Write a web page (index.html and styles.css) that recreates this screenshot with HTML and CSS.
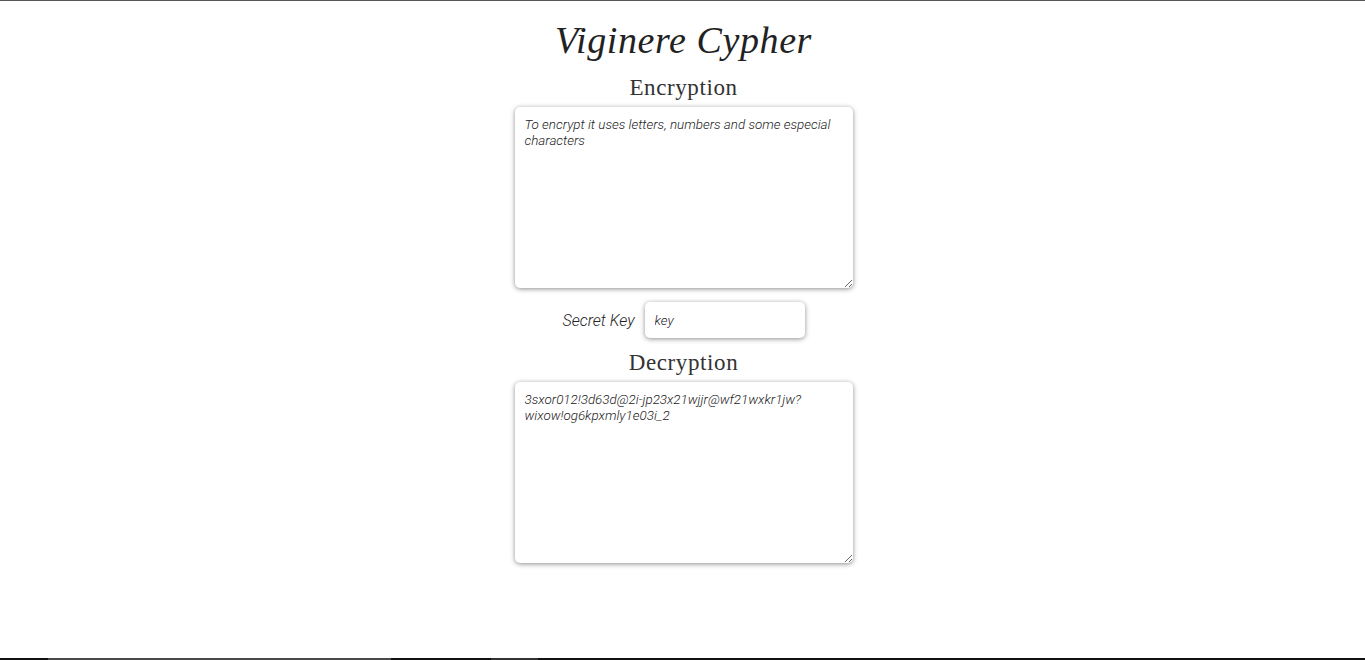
FILE: index.html
```html
<!DOCTYPE html>
<html>
<head>
<meta charset="utf-8">
<title>Viginere Cypher</title>
<link rel="stylesheet" href="styles.css">
</head>
<body>
<div class="topline"></div>
<main class="app">
  <h1 class="title">Viginere Cypher</h1>
  <h2 class="section">Encryption</h2>
  <textarea class="box">To encrypt it uses letters, numbers and some especial characters</textarea>
  <div class="keyrow">
    <label class="keylabel" for="key">Secret Key</label>
    <input id="key" class="keyinput" type="text" value="key">
  </div>
  <h2 class="section">Decryption</h2>
  <textarea class="box">3sxor012!3d63d@2i-jp23x21wjjr@wf21wxkr1jw?wixow!og6kpxmly1e03i_2</textarea>
</main>
<div class="taskbar">
  <span class="seg seg-a"></span>
  <span class="seg seg-b"></span>
</div>
</body>
</html>
```
FILE: styles.css
```css
html, body {
  margin: 0;
  padding: 0;
  background: #fff;
  height: 100%;
  overflow: hidden;
}
body {
  display: flex;
  flex-direction: column;
}
.topline {
  height: 1px;
  background: #555;
  flex: none;
}
.app {
  flex: 1;
  display: flex;
  flex-direction: column;
  align-items: center;
  padding-left: 2px;
}
.title {
  font-family: "Liberation Serif", serif;
  font-style: italic;
  font-weight: normal;
  font-size: 38px;
  line-height: 46px;
  margin: 16px 0 0 0;
  color: #222;
  letter-spacing: 0.6px;
}
.section {
  font-family: "Liberation Serif", serif;
  font-weight: normal;
  font-size: 23px;
  line-height: 26px;
  margin: 12px 0 6px 0;
  color: #333;
  letter-spacing: 0.6px;
}
.box {
  width: 338px;
  height: 181px;
  box-sizing: border-box;
  border: none;
  border-radius: 5px;
  box-shadow: 0 1px 5px rgba(0,0,0,0.45);
  padding: 10px 10px;
  font-family: Roboto, "Liberation Sans", sans-serif;
  font-style: italic;
  font-weight: 300;
  font-size: 13.4px;
  line-height: 16px;
  color: #222;
  resize: vertical;
  margin: 0;
  outline: none;
}
.keyrow {
  display: flex;
  align-items: center;
  gap: 10px;
  margin-top: 14px;
}
.keylabel {
  font-family: Roboto, "Liberation Sans", sans-serif;
  font-style: italic;
  font-weight: 300;
  font-size: 16px;
  color: #222;
}
.keyinput {
  width: 160px;
  height: 36px;
  box-sizing: border-box;
  border: none;
  border-radius: 5px;
  box-shadow: 0 1px 5px rgba(0,0,0,0.45);
  padding: 0 10px;
  font-family: Roboto, "Liberation Sans", sans-serif;
  font-style: italic;
  font-weight: 300;
  font-size: 13.4px;
  color: #222;
  outline: none;
}
.taskbar {
  height: 2px;
  background: #111;
  flex: none;
  display: flex;
}
.seg { display: block; height: 2px; }
.seg-a { margin-left: 48px; width: 343px; background: #4a4a4a; }
.seg-b { margin-left: 100px; width: 47px; background: #333; }
```
